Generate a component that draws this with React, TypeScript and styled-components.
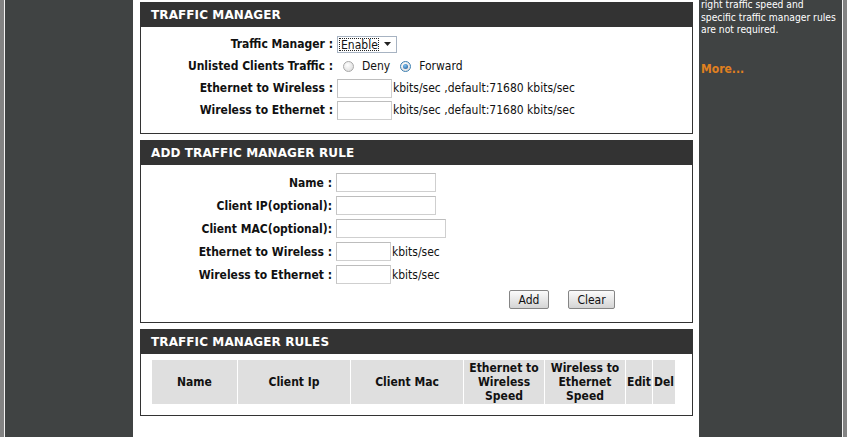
import styled, { createGlobalStyle } from 'styled-components';

const GlobalStyle = createGlobalStyle`
  html, body, #root {
    height: 100%;
    margin: 0;
  }
  body {
    font-family: Tahoma, "DejaVu Sans Condensed", "DejaVu Sans", sans-serif;
    font-size: 12px;
    color: #111;
    background: #fff;
    overflow: hidden;
  }
`;

const Page = styled.div`
  display: flex;
  width: 847px;
  height: 100%;
`;

const EdgeStrip = styled.div<{ $side: 'left' | 'right' }>`
  flex: none;
  width: 4px;
  background: #838383;
  border-${p => (p.$side === 'left' ? 'right' : 'left')}: 1px solid #f2f2f2;
`;

const SideNav = styled.div`
  flex: none;
  width: 128px;
  background: #404343;
`;

const Main = styled.main`
  flex: none;
  width: 566px;
  box-sizing: border-box;
  padding: 2px 6px 0 7px;
  background: #fff;
`;

const Hints = styled.aside`
  flex: none;
  width: 143px;
  box-sizing: border-box;
  padding-left: 2px;
  background: #404343;
  color: #fff;
  overflow: hidden;
`;

const HintText = styled.p`
  margin: -2px 0 0;
  font-size: 10.25px;
  line-height: 12.5px;
  white-space: nowrap;
`;

const MoreLink = styled.a`
  display: block;
  margin-top: 26px;
  color: #e0801f;
  font-weight: bold;
  font-size: 12px;
  text-decoration: none;
`;

const Section = styled.section`
  border: 1px solid #333;
  margin-bottom: 6px;
`;

const SectionTitle = styled.h2`
  margin: 0;
  height: 24px;
  line-height: 25px;
  padding-left: 10px;
  background: #333;
  color: #fff;
  font-family: "DejaVu Sans", Verdana, sans-serif;
  font-size: 12px;
  font-weight: bold;
  letter-spacing: 0.1px;
`;

const SectionBody = styled.div<{ $top: number; $bottom: number }>`
  padding: ${p => p.$top}px 0 ${p => p.$bottom}px;
`;

const FormRow = styled.div<{ $h: number; $label: number }>`
  display: grid;
  grid-template-columns: ${p => p.$label}px 1fr;
  column-gap: 4px;
  height: ${p => p.$h}px;
  align-items: center;
`;

const Label = styled.span`
  text-align: right;
  font-weight: bold;
  white-space: nowrap;
`;

const Control = styled.div`
  display: flex;
  align-items: center;
  white-space: nowrap;
`;

const TextInput = styled.input<{ $w: number }>`
  width: ${p => p.$w}px;
  height: 19px;
  box-sizing: border-box;
  margin: 0 1px 0 0;
  padding: 0 2px;
  border: 1px solid #cfcfcf;
  border-top-color: #bdbdbd;
  border-left-color: #c4c4c4;
  background: #fff;
  font: inherit;
`;

const Select = styled.div`
  display: flex;
  align-items: center;
  width: 60px;
  height: 17px;
  box-sizing: border-box;
  padding: 1px;
  border: 1px solid #a7b3c2;
  background: #fff;
`;

const SelectValue = styled.span`
  flex: 1;
  height: 13px;
  line-height: 12px;
  padding-left: 1px;
  border: 1px dotted #222;
  box-sizing: border-box;
`;

const SelectArrow = styled.span`
  display: flex;
  align-items: center;
  justify-content: center;
  width: 16px;
`;

const RadioGroup = styled.div`
  display: flex;
  align-items: center;
  padding-left: 6px;
`;

const Radio = styled.span<{ $checked?: boolean }>`
  position: relative;
  width: 9px;
  height: 9px;
  border-radius: 50%;
  border: 1px solid ${p => (p.$checked ? '#3c7fb1' : '#a9a9a9')};
  background: radial-gradient(circle at 40% 35%, #ffffff, #d6d6d6);
  margin-right: 8px;
  &::after {
    content: '';
    display: ${p => (p.$checked ? 'block' : 'none')};
    position: absolute;
    inset: 2px;
    border-radius: 50%;
    background: radial-gradient(circle at 40% 35%, #7cc4f2, #1b4f8f);
  }
`;

const RadioText = styled.span`
  margin-right: 10px;
`;

const Button = styled.button<{ $w: number }>`
  width: ${p => p.$w}px;
  height: 19px;
  padding: 0;
  border: 1px solid #858585;
  border-radius: 2px;
  background: linear-gradient(#fbfbfb, #e4e4e4 60%, #d4d4d4);
  font: 12px Tahoma, "DejaVu Sans Condensed", "DejaVu Sans", sans-serif;
  color: #111;
`;

const ButtonBar = styled.div`
  display: flex;
  gap: 19px;
  padding-left: 173px;
  padding-top: 3px;
`;

const RulesTable = styled.div`
  display: grid;
  grid-template-columns: 85px 112px 112px 80px 80px 26px 22px;
  gap: 1px;
  margin-left: 11px;
  width: 523px;
`;

const HeadCell = styled.div`
  display: flex;
  align-items: center;
  justify-content: center;
  height: 44px;
  background: #dfdfdf;
  font-weight: bold;
  text-align: center;
  line-height: 14px;
`;

const DownArrow = () => (
  <svg width="7" height="4" viewBox="0 0 7 4">
    <path d="M0 0h7L3.5 4z" fill="#222" />
  </svg>
);

const speedNote = 'kbits/sec ,default:71680 kbits/sec';

const headers = [
  'Name',
  'Client Ip',
  'Client Mac',
  'Ethernet to Wireless Speed',
  'Wireless to Ethernet Speed',
  'Edit',
  'Del',
];

const App = () => {
  return (
    <Page>
      <GlobalStyle />
      <EdgeStrip $side="left" />
      <SideNav />

      <Main>
        <Section>
          <SectionTitle>TRAFFIC MANAGER</SectionTitle>
          <SectionBody $top={6} $bottom={12}>
            <FormRow $h={22} $label={192}>
              <Label>Traffic Manager :</Label>
              <Control>
                <Select>
                  <SelectValue>Enable</SelectValue>
                  <SelectArrow>
                    <DownArrow />
                  </SelectArrow>
                </Select>
              </Control>
            </FormRow>
            <FormRow $h={22} $label={192}>
              <Label>Unlisted Clients Traffic :</Label>
              <RadioGroup>
                <Radio />
                <RadioText>Deny</RadioText>
                <Radio $checked />
                <RadioText>Forward</RadioText>
              </RadioGroup>
            </FormRow>
            <FormRow $h={22} $label={192}>
              <Label>Ethernet to Wireless :</Label>
              <Control>
                <TextInput $w={55} />
                {speedNote}
              </Control>
            </FormRow>
            <FormRow $h={22} $label={192}>
              <Label>Wireless to Ethernet :</Label>
              <Control>
                <TextInput $w={55} />
                {speedNote}
              </Control>
            </FormRow>
          </SectionBody>
        </Section>

        <Section>
          <SectionTitle>ADD TRAFFIC MANAGER RULE</SectionTitle>
          <SectionBody $top={6} $bottom={12}>
            <FormRow $h={23} $label={191}>
              <Label>Name :</Label>
              <Control>
                <TextInput $w={100} />
              </Control>
            </FormRow>
            <FormRow $h={23} $label={191}>
              <Label>Client IP(optional):</Label>
              <Control>
                <TextInput $w={100} />
              </Control>
            </FormRow>
            <FormRow $h={23} $label={191}>
              <Label>Client MAC(optional):</Label>
              <Control>
                <TextInput $w={110} />
              </Control>
            </FormRow>
            <FormRow $h={23} $label={191}>
              <Label>Ethernet to Wireless :</Label>
              <Control>
                <TextInput $w={55} />
                kbits/sec
              </Control>
            </FormRow>
            <FormRow $h={23} $label={191}>
              <Label>Wireless to Ethernet :</Label>
              <Control>
                <TextInput $w={55} />
                kbits/sec
              </Control>
            </FormRow>
            <FormRow $h={24} $label={191}>
              <span />
              <ButtonBar>
                <Button $w={40}>Add</Button>
                <Button $w={47}>Clear</Button>
              </ButtonBar>
            </FormRow>
          </SectionBody>
        </Section>

        <Section>
          <SectionTitle>TRAFFIC MANAGER RULES</SectionTitle>
          <SectionBody $top={6} $bottom={11}>
            <RulesTable>
              {headers.map(h => (
                <HeadCell key={h}>{h}</HeadCell>
              ))}
            </RulesTable>
          </SectionBody>
        </Section>
      </Main>

      <Hints>
        <HintText>
          right traffic speed and
          <br />
          specific traffic manager rules
          <br />
          are not required.
        </HintText>
        <MoreLink href="#">More...</MoreLink>
      </Hints>
      <EdgeStrip $side="right" />
    </Page>
  );
};

export default App;
